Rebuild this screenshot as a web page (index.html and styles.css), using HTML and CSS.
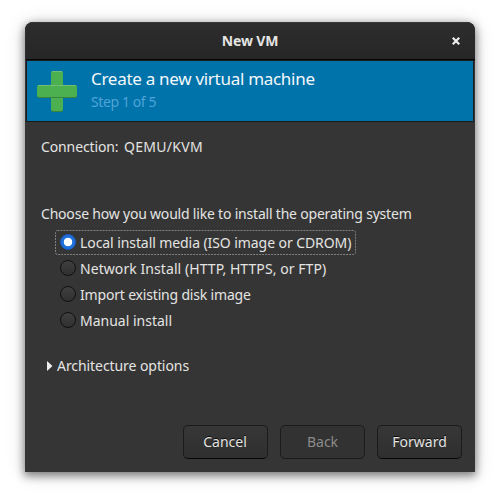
FILE: index.html
```html
<!DOCTYPE html>
<html lang="en">
<head>
<meta charset="utf-8">
<title>New VM</title>
<link rel="stylesheet" href="styles.css">
</head>
<body>
<main class="window">
  <header class="titlebar">
    <span class="window-title"><span class="fit title-text">New VM</span></span>
    <svg class="close" width="8" height="8" viewBox="0 0 8 8"><path d="M.8 .8L7.2 7.2M7.2 .8L.8 7.2"/></svg>
  </header>
  <section class="banner">
    <svg class="plus" width="40" height="41" viewBox="0 0 40 41">
      <rect x="14" y="1" width="12" height="40" rx="2" fill="#39843b"/>
      <rect x="14" y="0" width="12" height="40" rx="2" fill="#4caf50"/>
      <path d="M15 .5H25" stroke="#70bf73"/>
      <rect x="0" y="15" width="40" height="12" rx="2" fill="#39843b"/>
      <rect x="0" y="14" width="40" height="12" rx="2" fill="#4caf50"/>
      <path d="M1 14.5H39" stroke="#70bf73"/>
    </svg>
    <div class="banner-text">
      <h1 class="fit heading">Create a new virtual machine</h1>
      <p class="fit step">Step 1 of 5</p>
    </div>
  </section>
  <section class="content">
    <div class="connection"><span class="fit conn-label">Connection:</span><span class="fit conn-value">QEMU/KVM</span></div>
    <p class="fit question">Choose how you would like to install the operating system</p>
    <div class="options">
      <label class="option"><i class="radio checked"></i><span class="fit opt-local">Local install media (ISO image or CDROM)</span>
        <svg class="focus" width="301" height="26"><rect x=".5" y=".5" width="300" height="24" rx="2"/></svg></label>
      <label class="option"><i class="radio"></i><span class="fit opt-network">Network Install (HTTP, HTTPS, or FTP)</span></label>
      <label class="option"><i class="radio"></i><span class="fit opt-import">Import existing disk image</span></label>
      <label class="option"><i class="radio"></i><span class="fit opt-manual">Manual install</span></label>
    </div>
    <div class="expander"><svg width="6" height="10" viewBox="0 0 6 10"><path d="M0 0L5.5 5L0 10Z"/></svg><span class="fit arch">Architecture options</span></div>
  </section>
  <footer class="actions">
    <button class="button"><span class="fit cancel">Cancel</span></button>
    <button class="button" disabled><span class="fit">Back</span></button>
    <button class="button"><span class="fit">Forward</span></button>
  </footer>
</main>
</body>
</html>
```
FILE: styles.css
```css
* { box-sizing: border-box; }
body {
  margin: 0;
  padding: 22px 25px 28px;
  width: 500px;
  height: 500px;
  overflow: hidden;
  background: #fff;
  color: #e4e4e2;
  font: 14px/20px "Noto Sans", sans-serif;
}
h1, p { margin: 0; }
.fit { white-space: nowrap; }
.window {
  width: 450px;
  height: 450px;
  display: flex;
  flex-direction: column;
  background: #353535;
  border-radius: 8px 8px 0 0;
  box-shadow: 0 3px 9px 1px rgba(0, 0, 0, .45), 0 2px 20px rgba(0, 0, 0, .16);
  overflow: hidden;
}
.titlebar {
  height: 39px;
  flex: none;
  display: flex;
  align-items: center;
  padding: 0 15px 2px 23px;
  background: linear-gradient(#2d2d2d, #262626);
  box-shadow: inset 0 1px #373737, inset 1px 0 #303030, inset 0 -1px #1b1b1b, inset 0 -2px #070707;
  border-radius: 8px 8px 0 0;
}
.window-title { flex: 1; text-align: center; font-weight: 700; letter-spacing: -.15px; }
.close { fill: none; stroke: #eeeeec; stroke-width: 2.2; }
.banner {
  height: 61px;
  flex: none;
  display: flex;
  margin: 0 2px;
  padding: 10px;
  background: #0073aa;
  border-bottom: 1px solid #1b1b1b;
  box-shadow: -1px 0 #1b1b1b, 1px 0 #1b1b1b;
}
.banner-text { margin: -4px 0 0 14px; }
.heading { font-size: 17px; line-height: 24px; font-weight: 400; letter-spacing: -.29px; color: #f4f8fb; }
.step { margin-top: 1px; letter-spacing: -.4px; color: #4fa3d8; }
.content { flex: 1; padding: 15px 16px 0; }
.connection { display: flex; height: 67px; }
.conn-label { width: 83px; letter-spacing: -.12px; }
.conn-value { letter-spacing: .3px; }
.question { letter-spacing: -.2px; }
.options { margin: 5px 0 0 14px; }
.option { position: relative; display: flex; align-items: center; height: 26px; gap: 4px; padding-left: 5px; width: 301px; }
.option .fit { padding-top: 2px; }
.opt-local { letter-spacing: -.08px; }
.opt-network { letter-spacing: .07px; }
.opt-import { letter-spacing: -.18px; }
.arch { letter-spacing: -.07px; }
.focus { position: absolute; left: 0; top: 1px; fill: none; stroke: #828282; stroke-dasharray: 2 1; }
.radio {
  width: 16px;
  height: 16px;
  flex: none;
  border: 1px solid #101010;
  border-radius: 50%;
  background: linear-gradient(#3f3f3f, #303030);
}
.radio.checked { border-color: #1a5fbe; background: radial-gradient(circle, #fff 0 3.9px, #2070dc 4.6px); }
.expander { display: flex; align-items: center; gap: 4px; margin: 23px 0 0 6px; }
.expander svg { fill: #eeeeec; }
.actions { display: flex; gap: 12px; justify-content: flex-end; padding: 0 13px 13px; }
.button {
  width: 85px;
  height: 34px;
  padding: 0;
  border: 1px solid #1b1b1b;
  border-bottom-color: #070707;
  border-radius: 5px;
  background: linear-gradient(#373737, #2f2f2f);
  color: #e4e4e2;
  font: inherit;
  text-shadow: 0 -1px rgba(0, 0, 0, .8);
}
.cancel { padding-right: 1px; }
.button:disabled { background: #323232; border-color: #1b1b1b; color: #8b8b8a; text-shadow: none; }
```
